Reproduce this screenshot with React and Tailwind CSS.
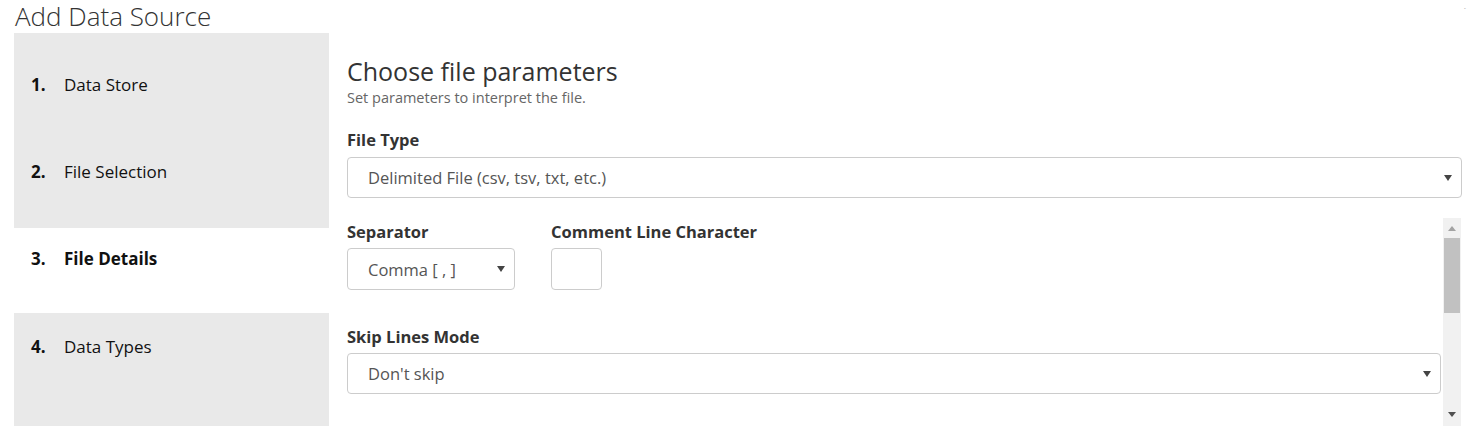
import React from 'react';

const font = { fontFamily: '"Open Sans", "Noto Sans", sans-serif' };

const Caret = ({ color = '#444' }) => (
  <svg width="8" height="6" viewBox="0 0 8 6" className="flex-shrink-0">
    <path d="M0 0 H8 L4 6 Z" fill={color} />
  </svg>
);

function SelectBox({ value, className = '', height = 'h-[41px]' }) {
  return (
    <div className={`${height} ${className} border border-[#cccccc] rounded-[4px] bg-white flex items-center pl-[20px] pr-[9px]`}>
      <span className="flex-1 pt-[2px] text-[16.5px] text-[#555555] truncate">{value}</span>
      <Caret />
    </div>
  );
}

const steps = [
  { n: '1.', label: 'Data Store', h: 'h-[108px]', pt: 'pt-[41px]', bg: 'bg-[#e9e9e9]' },
  { n: '2.', label: 'File Selection', h: 'h-[87px]', pt: 'pt-[20px]', bg: 'bg-[#e9e9e9]' },
  { n: '3.', label: 'File Details', h: 'h-[85px]', pt: 'pt-[20px]', bg: 'bg-white', active: true },
  { n: '4.', label: 'Data Types', h: 'h-[120px]', pt: 'pt-[23px]', bg: 'bg-[#e9e9e9]' },
];

export default function App() {
  return (
    <div className="w-[1468px] h-[426px] overflow-hidden bg-white relative text-[#222]" style={font}>
      <span className="absolute right-[2px] top-[6px] text-[8px] text-[#999] leading-none">´</span>
      <h1 className="h-[33px] pl-[15px] text-[26px] leading-[33px] font-light text-[#333333] whitespace-nowrap">Add Data Source</h1>

      <div className="flex">
        {/* Steps */}
        <div className="ml-[14px] w-[315px] flex-shrink-0 flex flex-col">
          {steps.map(s => (
            <div key={s.n} className={`${s.h} ${s.pt} ${s.bg} pl-[17px] flex text-[17px] leading-[22px] text-[#111]`}>
              <span className="w-[33px] font-bold">{s.n}</span>
              <span className={s.active ? 'font-bold' : ''}>{s.label}</span>
            </div>
          ))}
        </div>

        {/* Form */}
        <div className="flex-1 pl-[18px] pr-[6px]">
          <h2 className="mt-[25px] text-[25px] leading-[26px] text-[#333333]">Choose file parameters</h2>
          <p className="mt-[6px] text-[14.5px] leading-[16px] text-[#666666]">Set parameters to interpret the file.</p>

          <div className="mt-[23px] text-[16.5px] leading-[22px] font-bold text-[#333333]">File Type</div>
          <SelectBox value="Delimited File (csv, tsv, txt, etc.)" className="mt-[6px]" />

          <div className="mt-[20px] h-[208px] flex overflow-hidden">
            <div className="flex-1 pr-[2px] pt-[3px]">
              <div className="flex gap-[36px]">
                <div className="w-[168px]">
                  <div className="text-[16.5px] leading-[22px] font-bold text-[#333333]">Separator</div>
                  <SelectBox value="Comma [ , ]" className="mt-[5px]" height="h-[42px]" />
                </div>
                <div>
                  <div className="text-[16.5px] leading-[22px] font-bold text-[#333333] whitespace-nowrap">Comment Line Character</div>
                  <div className="mt-[5px] w-[51px] h-[42px] border border-[#cccccc] rounded-[4px]" />
                </div>
              </div>

              <div className="mt-[36px] text-[16.5px] leading-[22px] font-bold text-[#333333]">Skip Lines Mode</div>
              <SelectBox value="Don't skip" className="mt-[5px]" />
            </div>

            {/* Scrollbar */}
            <div className="w-[18px] mr-[1px] bg-[#f1f1f1] flex flex-col items-center">
              <div className="h-[20px] flex items-center justify-center">
                <svg width="8" height="5" viewBox="0 0 8 5"><path d="M0 5 H8 L4 0 Z" fill="#a3a3a3" /></svg>
              </div>
              <div className="w-[16px] h-[75px] bg-[#c1c1c1]" />
              <div className="flex-1" />
              <div className="h-[20px] flex items-start justify-center pt-[6px]">
                <svg width="8" height="5" viewBox="0 0 8 5"><path d="M0 0 H8 L4 5 Z" fill="#505050" /></svg>
              </div>
            </div>
          </div>
        </div>
      </div>
    </div>
  );
}
